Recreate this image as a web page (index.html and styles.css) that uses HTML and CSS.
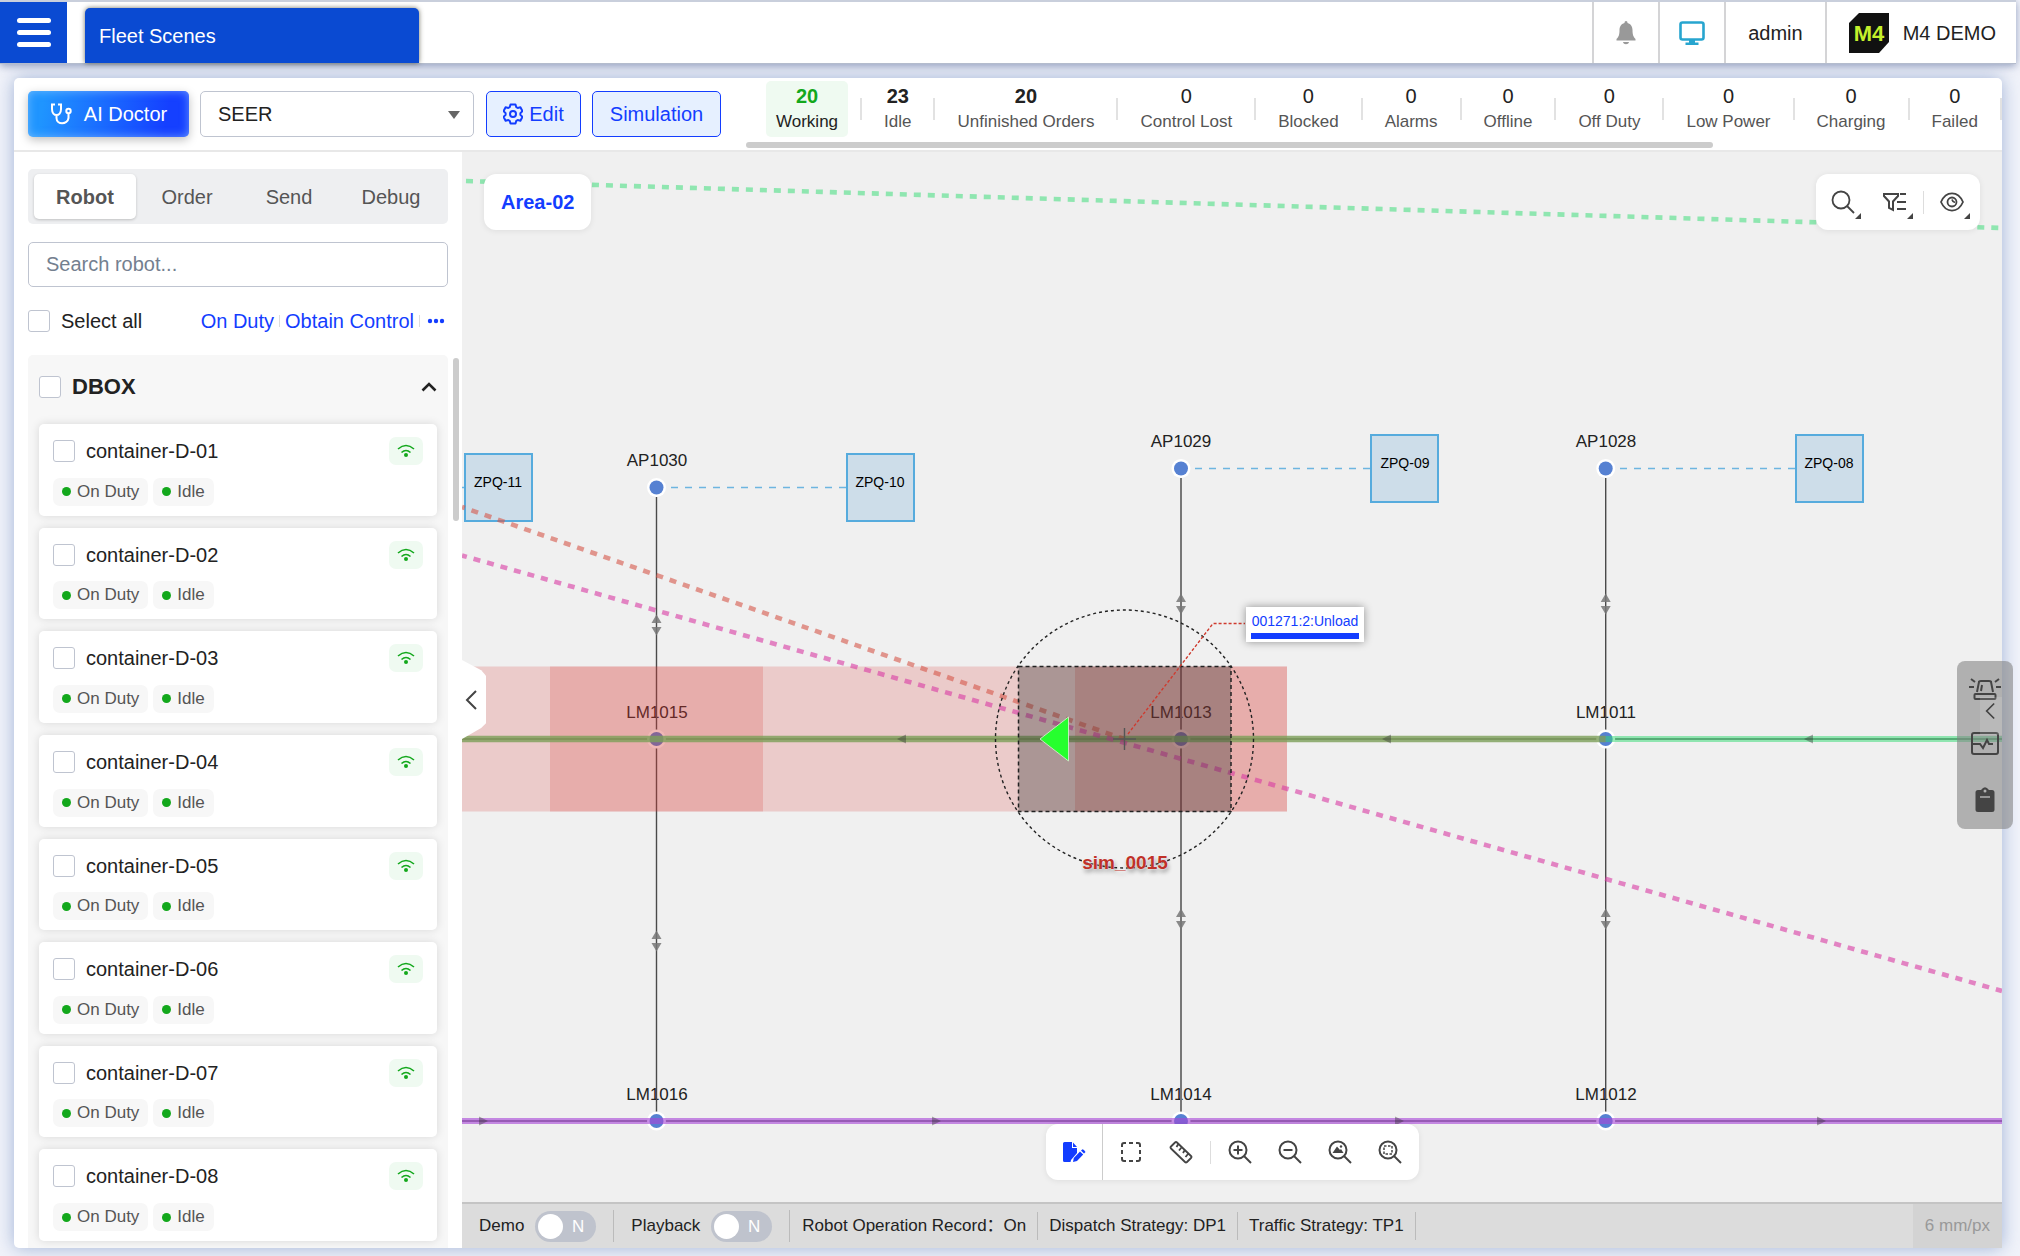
FILE: index.html
```html
<!DOCTYPE html>
<html lang="en">
<head>
<meta charset="utf-8">
<title>Fleet Scenes</title>
<link rel="stylesheet" href="styles.css">
</head>
<body>
<svg class="sprite" aria-hidden="true">
  <symbol id="wifi" viewBox="0 0 18 14"><path d="M1 5Q9-2 17 5M4.500 8.500Q9 4.500 13.500 8.500" fill="none" stroke="currentColor" stroke-width="1.600"/><circle cx="9" cy="11" r="2" fill="currentColor"/></symbol>
  <symbol id="back" viewBox="0 0 12 20"><path d="M11 1 2 10l9 9" fill="none" stroke="currentColor" stroke-width="2"/></symbol>
  <symbol id="lens" viewBox="0 0 24 24"><circle cx="10" cy="10" r="8.500" fill="none" stroke="currentColor" stroke-width="2"/><path d="m16 16 7 7" stroke="currentColor" stroke-width="2"/></symbol>
</svg>

<header class="topbar">
  <button class="menu" aria-label="Menu"><span></span><span></span><span></span></button>
  <a class="tab" href="#">Fleet Scenes</a>
  <div class="account">
    <button class="cell icon" aria-label="Notifications"><svg width="20" height="24" viewBox="0 0 20 24"><path d="M10 0c1 0 1.500.8 1.500 2C15 3 16.500 6 16.500 9c0 5 1 7 3 9v1.500H.5V18c2-2 3-4 3-9 0-3 1.500-6 5-7C8.500.8 9 0 10 0zM7 21h6c-.5 3-5.500 3-6 0z" fill="#999"/></svg></button>
    <button class="cell icon" aria-label="Screen"><svg width="26" height="24" viewBox="0 0 26 24"><rect x="1.500" y="1.500" width="23" height="17" rx="2" fill="none" stroke="#27a5cf" stroke-width="2.600"/><path d="M10 19h6v2.500h3.500V24h-13v-2.500H10z" fill="#27a5cf"/></svg></button>
    <button class="cell">admin</button>
    <a class="cell brand" href="#"><svg width="40" height="40" viewBox="0 0 40 40"><path d="M10 0h30v29L30 40H0V10z" fill="#111"/><text class="mark" x="20" y="28" text-anchor="middle">M4</text></svg>M4 DEMO</a>
  </div>
</header>

<main class="card">
  <div class="toolbar">
    <button class="btn doctor"><svg width="22" height="22" viewBox="0 0 22 22" fill="none" stroke="#fff" stroke-width="2"><path d="M5 1.500H2V6c0 8 9 8 9 0V1.500H8M6.500 12v3c0 7 11 7 12 0V10"/><circle cx="18.500" cy="8" r="2.200"/></svg>AI Doctor</button>
    <div class="scene"><select aria-label="Scene"><option>SEER</option></select></div>
    <button class="btn edit"><svg width="20" height="22" viewBox="0 0 20 22" fill="none" stroke="currentColor" stroke-width="2"><path d="M7.500 1.500h5l.8 2.700 1.400.8 2.700-.7 2 3.800-2 2v1.800l2 2-2 3.800-2.700-.7-1.400.8-.8 2.700h-5l-.8-2.700-1.400-.8-2.700.7-2-3.800 2-2v-1.800l-2-2 2-3.800 2.700.7 1.400-.8z" stroke-linejoin="round"/><circle cx="10" cy="11" r="3"/></svg>Edit</button>
    <button class="btn sim">Simulation</button>
    <div class="stats">
      <div class="row">
        <div class="stat on"><b>20</b><span>Working</span></div><i></i>
        <div class="stat"><b>23</b><span>Idle</span></div><i></i>
        <div class="stat"><b>20</b><span>Unfinished Orders</span></div><i></i>
        <div class="stat"><em>0</em><span>Control Lost</span></div><i></i>
        <div class="stat"><em>0</em><span>Blocked</span></div><i></i>
        <div class="stat"><em>0</em><span>Alarms</span></div><i></i>
        <div class="stat"><em>0</em><span>Offline</span></div><i></i>
        <div class="stat"><em>0</em><span>Off Duty</span></div><i></i>
        <div class="stat"><em>0</em><span>Low Power</span></div><i></i>
        <div class="stat"><em>0</em><span>Charging</span></div><i></i>
        <div class="stat"><em>0</em><span>Failed</span></div><i></i>
      </div>
      <div class="hbar"></div>
    </div>
  </div>

  <div class="body">
    <aside class="side">
      <nav class="tabs"><button class="active">Robot</button><button>Order</button><button>Send</button><button>Debug</button></nav>
      <input class="search" type="text" placeholder="Search robot..." aria-label="Search robot">
      <div class="bulk">
        <label><input type="checkbox">Select all</label>
        <span class="links"><a href="#">On Duty</a><i></i><a href="#">Obtain Control</a><i></i><button aria-label="More"><svg width="18" height="6" viewBox="0 0 18 6" fill="currentColor"><circle cx="3" cy="3" r="2.200"/><circle cx="9" cy="3" r="2.200"/><circle cx="15" cy="3" r="2.200"/></svg></button></span>
      </div>
      <div class="listwrap">
        <section class="group">
          <div class="ghead"><label><input type="checkbox">DBOX</label><button aria-label="Collapse group"><svg width="16" height="10" viewBox="0 0 16 10"><path d="m1.500 8.500 6.500-6.500 6.500 6.500" fill="none" stroke="#222" stroke-width="2.600"/></svg></button></div>
          <article class="robot"><div class="name"><label><input type="checkbox">container-D-01</label><span class="wifi"><svg width="18" height="14"><use href="#wifi"/></svg></span></div><div class="tags"><span>On Duty</span><span>Idle</span></div></article>
          <article class="robot"><div class="name"><label><input type="checkbox">container-D-02</label><span class="wifi"><svg width="18" height="14"><use href="#wifi"/></svg></span></div><div class="tags"><span>On Duty</span><span>Idle</span></div></article>
          <article class="robot"><div class="name"><label><input type="checkbox">container-D-03</label><span class="wifi"><svg width="18" height="14"><use href="#wifi"/></svg></span></div><div class="tags"><span>On Duty</span><span>Idle</span></div></article>
          <article class="robot"><div class="name"><label><input type="checkbox">container-D-04</label><span class="wifi"><svg width="18" height="14"><use href="#wifi"/></svg></span></div><div class="tags"><span>On Duty</span><span>Idle</span></div></article>
          <article class="robot"><div class="name"><label><input type="checkbox">container-D-05</label><span class="wifi"><svg width="18" height="14"><use href="#wifi"/></svg></span></div><div class="tags"><span>On Duty</span><span>Idle</span></div></article>
          <article class="robot"><div class="name"><label><input type="checkbox">container-D-06</label><span class="wifi"><svg width="18" height="14"><use href="#wifi"/></svg></span></div><div class="tags"><span>On Duty</span><span>Idle</span></div></article>
          <article class="robot"><div class="name"><label><input type="checkbox">container-D-07</label><span class="wifi"><svg width="18" height="14"><use href="#wifi"/></svg></span></div><div class="tags"><span>On Duty</span><span>Idle</span></div></article>
          <article class="robot"><div class="name"><label><input type="checkbox">container-D-08</label><span class="wifi"><svg width="18" height="14"><use href="#wifi"/></svg></span></div><div class="tags"><span>On Duty</span><span>Idle</span></div></article>
        </section>
        <div class="vbar"></div>
      </div>
    </aside>

    <section class="stage">
      <div class="map">
        <svg class="canvas" viewBox="462 152 1540 1050" preserveAspectRatio="xMidYMid slice" role="img" aria-label="Area map">
          <defs>
            <g id="node"><circle r="9.500" fill="#fff"/><circle r="7" fill="#5681d2"/></g>
            <path id="left" d="M-5 0 4-4.500v9z" fill="#333" opacity=".4"/>
            <path id="right" d="M5 0-4-4.500v9z" fill="#333" opacity=".4"/>
            <path id="both" d="M0-10.500 5-2h-10zM0 10.500 5 2h-10z" fill="#777" opacity=".85"/>
            <g id="bin"><rect x="1" y="1" width="67" height="67" fill="#cddde9" stroke="#56abdd" stroke-width="2"/></g>
          </defs>
          <!-- storage bins and their links -->
          <g stroke="#6db5e0" stroke-width="1.400" stroke-dasharray="7 7"><path d="M671 487.500h175M1195 468.500h175M1620 468.500h175M462 487.500h3"/></g>
          <use href="#bin" x="464" y="453"/><use href="#bin" x="846" y="453"/><use href="#bin" x="1370" y="434"/><use href="#bin" x="1795" y="434"/>
          <g class="bin-label"><text x="498" y="487">ZPQ-11</text><text x="880" y="487">ZPQ-10</text><text x="1405" y="468">ZPQ-09</text><text x="1829" y="468">ZPQ-08</text></g>
          <!-- lanes -->
          <g class="map-label"><text x="657" y="466">AP1030</text><text x="1181" y="447">AP1029</text><text x="1606" y="447">AP1028</text><text x="657" y="718">LM1015</text><text x="1181" y="718">LM1013</text><text x="1606" y="718">LM1011</text><text x="657" y="1100">LM1016</text><text x="1181" y="1100">LM1014</text><text x="1606" y="1100">LM1012</text></g>
          <path d="M656.500 497v624M1605.700 478v643" stroke="#4a4a4a" stroke-width="1.400"/>
          <path d="M1181 478v643" stroke="#777" stroke-width="2"/>
          <path d="M462 739h1540M462 1121h1540" stroke="#555" stroke-width="1.600"/>
          <use href="#node" x="656.500" y="487.500"/><use href="#node" x="1181" y="468.500"/><use href="#node" x="1605.700" y="468.500"/>
          <use href="#node" x="656.500" y="739"/><use href="#node" x="1181" y="739"/><use href="#node" x="1605.700" y="739"/>
          <use href="#node" x="656.500" y="1121"/><use href="#node" x="1181" y="1121"/><use href="#node" x="1605.700" y="1121"/>
          <use href="#both" x="656.500" y="625"/><use href="#both" x="1181" y="604"/><use href="#both" x="1605.700" y="604"/>
          <use href="#both" x="656.500" y="941"/><use href="#both" x="1181" y="919"/><use href="#both" x="1605.700" y="919"/>
          <!-- reserved space -->
          <path d="M462 666.500h825v145H462z" fill="#d73732" opacity=".2"/>
          <path d="M550 666.500h213v145H550zM1075 666.500h212v145h-212z" fill="#d73732" opacity=".2"/>
          <path d="M462 1121h1540" stroke="#a848d8" stroke-width="6" opacity=".62"/>
          <path d="M462 739h1143.700" stroke="#7da059" stroke-width="6.500" opacity=".8"/>
          <path d="M1605.700 739H2002" stroke="#31dc72" stroke-width="6" opacity=".5"/>
          <use href="#left" x="902" y="739"/><use href="#left" x="1387" y="739"/><use href="#left" x="1809" y="739"/>
          <use href="#right" x="483" y="1121"/><use href="#right" x="936" y="1121"/><use href="#right" x="1399" y="1121"/><use href="#right" x="1821" y="1121"/>
          <!-- planned routes -->
          <g fill="none" stroke-width="4.600" stroke-dasharray="7 7">
            <path d="M466 181 2002 228" stroke="#35dc75" opacity=".52"/>
            <path d="M462 507 1124 739" stroke="#d6564a" stroke-dashoffset="4" opacity=".6"/>
            <path d="M462 555.500 2002 991" stroke="#d93aa3" stroke-dashoffset="2" opacity=".6"/>
          </g>
          <!-- vehicle -->
          <path d="M1018.500 666.500h212.500v145h-212.500z" fill="#303030" opacity=".34"/>
          <path d="M1018.500 666.500h212.500v145h-212.500z" fill="none" stroke="#222" stroke-width="1.500" stroke-dasharray="4 3"/>
          <circle cx="1124.500" cy="739" r="129" fill="none" stroke="#222" stroke-width="1.400" stroke-dasharray="3 3"/>
          <path d="M1113 739h23M1124.500 728v22" stroke="#555" stroke-width="1.400"/>
          <path d="M1040 739 1068.500 717v44z" fill="#26ff2e" stroke="#c8e8c0" stroke-width="1"/>
          <path d="m1128 734 85-110.500h32" fill="none" stroke="#cf3a2e" stroke-width="1.400" stroke-dasharray="3 2"/>
          <text class="vehicle" x="1125" y="869">sim_0015</text>
          <g class="callout"><rect class="plate" x="1246" y="607" width="118" height="35"/><text x="1305" y="626">001271:2:Unload</text><rect x="1251" y="633" width="108" height="6" fill="#133dff"/></g>
        </svg>

        <div class="area">Area-02</div>
        <div class="tools">
          <button class="drop" aria-label="Search map"><svg width="24" height="24" viewBox="0 0 24 24" fill="none" stroke="currentColor" stroke-width="1.800"><circle cx="10" cy="10" r="8.500"/><path d="m16 16 7 7"/></svg></button>
          <button class="drop" aria-label="Filter"><svg width="24" height="20" viewBox="0 0 24 20" fill="none" stroke="currentColor" stroke-width="2"><path d="M1 2h14v2L10 9.500V18l-4-2V9.500L1 4zM17 2h6M14 10h9M14 17h9"/></svg></button>
          <i></i>
          <button class="drop" aria-label="Visibility"><svg width="24" height="20" viewBox="0 0 24 20" fill="none" stroke="currentColor" stroke-width="1.800"><path d="M1 10C6-1.500 18-1.500 23 10 18 21.500 6 21.500 1 10z"/><circle cx="12" cy="10" r="4.500"/><path d="M12 7.500q1 3 3 2.500"/></svg></button>
        </div>
        <button class="handle" aria-label="Collapse sidebar"><svg width="12" height="20"><use href="#back"/></svg></button>
        <div class="dock">
          <button aria-label="Alarms"><svg width="32" height="24" viewBox="0 0 32 24" fill="none" stroke="currentColor" stroke-width="2"><path d="M8 15 10 5q0-1 2-1h8q2 0 2 1l2 10M13 8l-1 6M0 10h5M27 10h5M2 2l4 3M30 2l-4 3"/><rect x="5.500" y="17" width="21" height="5" rx="1"/></svg></button>
          <button aria-label="Monitor"><svg width="28" height="24" viewBox="0 0 28 24" fill="none" stroke="currentColor" stroke-width="2"><rect x="1" y="1" width="26" height="21" rx="2"/><path d="M2 12h7l3 4 4-8 2 4h4"/></svg></button>
          <button aria-label="Tasks"><svg width="20" height="26" viewBox="0 0 20 26"><path d="M3 3h3q4-5.500 8 0h3q2.500 0 2.500 2.500v17Q19.500 25 17 25H3Q.5 25 .5 22.500v-17Q.5 3 3 3z" fill="currentColor"/><circle cx="10" cy="4" r="1.500" fill="#b0b0b0"/><path d="M5 10h10" stroke="#b0b0b0" stroke-width="1.500"/></svg></button>
          <span class="peek"><svg width="10" height="18" viewBox="0 0 12 20"><use href="#back"/></svg></span>
        </div>
        <div class="palette">
          <button class="main" aria-label="Edit scene"><svg width="24" height="22" viewBox="0 0 24 22" fill="currentColor"><path d="M2.500 1H10v6h5v5l-6 7-.5 2H2.500Q1 21 1 19.500v-17Q1 1 2.500 1zM11 1.500 15 6h-4z"/><path d="m11 21 .8-4 6.200-6.500 3.200 3L15 20zM19 9.500l1.500-1.200q1.500.2 3 2.700L22 12.500z"/></svg></button>
          <button aria-label="Select area"><svg width="22" height="22" viewBox="0 0 22 22"><path d="M2 6V4q0-2 2-2h2M9 2h4M16 2h2q2 0 2 2v2M20 9v4M20 16v2q0 2-2 2h-2M13 20H9M6 20H4q-2 0-2-2v-2M2 13V9" fill="none" stroke="currentColor" stroke-width="2"/></svg></button>
          <button aria-label="Measure"><svg width="24" height="24" viewBox="0 0 24 24" fill="none" stroke="currentColor" stroke-width="1.800"><path d="M2 6.500 6 2.500q1-1 2 0L22 16q1 1 0 2l-4 4q-1 1-2 0L2 8.500q-1-1 0-2zM9 4.500 7.500 7M12.500 7.500 10 10.500M15.500 10.500 14 13M19 14l-2.500 3"/></svg></button>
          <i></i>
          <button aria-label="Zoom in"><svg width="24" height="24" viewBox="0 0 24 24"><use href="#lens"/><path d="M5.500 10h9M10 5.500v9" stroke="currentColor" stroke-width="2"/></svg></button>
          <button aria-label="Zoom out"><svg width="24" height="24" viewBox="0 0 24 24"><use href="#lens"/><path d="M5.500 10h9" stroke="currentColor" stroke-width="2"/></svg></button>
          <button aria-label="Fit map"><svg width="24" height="24" viewBox="0 0 24 24"><use href="#lens"/><path d="m4.500 13 4.500-6.500 3 3.500 1-1 2.500 4z" fill="currentColor"/><circle cx="13" cy="6.500" r="1.200" fill="currentColor"/></svg></button>
          <button aria-label="Fit selection"><svg width="24" height="24" viewBox="0 0 24 24"><use href="#lens"/><rect x="6" y="6" width="8" height="8" fill="none" stroke="currentColor" stroke-width="1.500" stroke-dasharray="2.500 1.500"/></svg></button>
        </div>
      </div>
      <footer class="status">
        <label>Demo<span class="switch"><input type="checkbox" role="switch"><b>N</b></span></label><i class="tall"></i>
        <label>Playback<span class="switch"><input type="checkbox" role="switch"><b>N</b></span></label><i class="tall near"></i>
        <span>Robot Operation Record：On</span><i></i>
        <span>Dispatch Strategy: DP1</span><i></i>
        <span>Traffic Strategy: TP1</span><i></i>
        <span class="scale">6 mm/px</span>
      </footer>
    </section>
  </div>
</main>
</body>
</html>
```
FILE: styles.css
```css
* { box-sizing: border-box; }
html, body { height: 100%; }
body {
  margin: 0;
  display: flex;
  flex-direction: column;
  background: #f1f3fa;
  color: #222;
  font: 20px/24px "Liberation Sans", "Noto Sans CJK SC", sans-serif;
  overflow: hidden;
}
button { font: inherit; color: inherit; background: none; border: 0; padding: 0; cursor: pointer; }
a { color: inherit; text-decoration: none; }
svg { display: block; flex: none; }
.sprite { position: absolute; width: 0; height: 0; }

input[type="checkbox"] {
  appearance: none;
  width: 22px;
  height: 22px;
  margin: 0;
  border: 1px solid #bfc4d0;
  border-radius: 3px;
  background: #fff;
  flex: none;
}

/* top bar */
.topbar {
  display: flex;
  height: 64px;
  flex: none;
  margin-right: 4px;
  border-top: 2px solid #c9cfdc;
  border-bottom: 1px solid #b4bccd;
  background: #fff;
  box-shadow: 0 2px 8px rgba(70, 90, 140, .55);
  position: relative;
}
.menu {
  width: 67px;
  background: #0a4ad2;
  display: flex;
  flex-direction: column;
  align-items: center;
  justify-content: center;
  gap: 7px;
}
.menu span { width: 34px; height: 5px; border-radius: 3px; background: #fff; }
.tab {
  width: 334px;
  margin: 6px 0 0 18px;
  padding: 16px 14px;
  border-radius: 5px 5px 0 0;
  background: #0a4ad2;
  color: #fff;
  box-shadow: 0 0 5px rgba(60, 60, 40, .7);
}
.account { margin-left: auto; display: flex; }
.cell {
  display: flex;
  align-items: center;
  border-left: 2px solid #d4d4d6;
  padding: 0 22px;
}
.cell.icon { width: 66px; padding: 0; justify-content: center; }
.brand { gap: 14px; padding: 0 20px 0 22px; }
.mark { font-size: 22px; font-weight: bold; fill: #c5f02c; }

/* main card */
.card {
  flex: 1;
  min-height: 0;
  margin: 14px 18px 8px 14px;
  display: flex;
  flex-direction: column;
  background: #fff;
  border-radius: 5px;
  box-shadow: 0 0 18px rgba(80, 115, 180, .5);
}
.toolbar {
  flex: none;
  height: 74px;
  display: flex;
  padding-left: 14px;
  border-bottom: 2px solid #e8e8e8;
}
.btn {
  height: 46px;
  margin-top: 13px;
  border-radius: 5px;
  display: flex;
  align-items: center;
  justify-content: center;
}
.doctor {
  width: 161px;
  gap: 12px;
  color: #fff;
  background: linear-gradient(100deg, #1f95ff 10%, #1540ff 85%);
  box-shadow: 0 3px 10px rgba(0, 0, 0, .25), inset 0 0 10px rgba(160, 210, 255, .6);
}
.scene { position: relative; margin: 13px 12px 0 11px; height: 46px; }
.scene select {
  appearance: none;
  width: 274px;
  height: 46px;
  padding: 0 17px;
  border: 1px solid #bfc4d0;
  border-radius: 5px;
  background: #fff;
  font: inherit;
  color: inherit;
}
.scene::after {
  content: "";
  position: absolute;
  right: 14px;
  top: 20px;
  border: 6px solid transparent;
  border-top: 8px solid #666;
  border-bottom: 0;
}
.edit, .sim { border: 1px solid #133dff; background: #e6f0ff; color: #133dff; }
.edit { width: 95px; gap: 6px; margin-right: 11px; }
.sim { width: 129px; }

.stats { flex: 1; min-width: 0; margin-left: 25px; overflow: hidden; }
.row { display: flex; align-items: center; gap: 12px; padding: 3px 0 0 20px; }
.stat {
  flex: none;
  height: 56px;
  padding: 4px 10px;
  border-radius: 5px;
  display: flex;
  flex-direction: column;
  align-items: center;
  font-size: 17px;
}
.stat b, .stat em { font-size: 20px; font-style: normal; line-height: 22px; }
.stat span { color: #555; line-height: 30px; }
.stat.on { background: #effaf1; }
.stat.on b { color: #13a81c; }
.stat.on span { color: #222; }
.row i { flex: none; width: 2px; height: 22px; background: #e2e2e2; }
.hbar { width: 77%; height: 6px; margin-top: 5px; border-radius: 3px; background: #ccc; }

.body { flex: 1; min-height: 0; display: flex; }

/* sidebar */
.side {
  width: 448px;
  flex: none;
  padding: 17px 3px 0 14px;
  display: flex;
  flex-direction: column;
}
.tabs, .search, .bulk { margin-right: 11px; }
.tabs {
  display: grid;
  grid-template-columns: repeat(4, 1fr);
  padding: 5px 6px;
  border-radius: 5px;
  background: #eeeff1;
  color: #555;
}
.tabs button { height: 45px; border-radius: 5px; }
.tabs .active { background: #fff; font-weight: bold; box-shadow: 0 1px 3px rgba(0, 0, 0, .2); }
.search {
  height: 45px;
  margin-top: 18px;
  padding: 0 17px;
  border: 1px solid #bfc4d0;
  border-radius: 5px;
  font: inherit;
}
.search::placeholder { color: #74808f; opacity: 1; }
.bulk { display: flex; justify-content: space-between; align-items: center; margin-top: 22px; }
.bulk label, .ghead label, .name label { display: flex; align-items: center; gap: 11px; }
.links { display: flex; align-items: center; gap: 5px; color: #133dff; margin-right: 3px; }
.links i { width: 1px; height: 12px; background: #ddd; }
.links button { margin-left: 2px; }
.listwrap { flex: 1; min-height: 0; margin-top: 22px; display: flex; gap: 5px; }
.group {
  flex: 1;
  display: flex;
  flex-direction: column;
  gap: 12px;
  padding: 0 11px 7px;
  border-radius: 5px 5px 0 0;
  background: #f7f7f7;
}
.ghead { display: flex; align-items: center; justify-content: space-between; height: 57px; padding-top: 6px; font-size: 22px; font-weight: bold; }
.robot {
  flex: 1;
  min-height: 0;
  display: flex;
  flex-direction: column;
  justify-content: space-between;
  padding: 13px 14px 10px;
  border-radius: 5px;
  background: #fff;
  box-shadow: 0 0 10px rgba(0, 0, 0, .13);
}
.name { display: flex; justify-content: space-between; align-items: center; }
.wifi { display: grid; place-items: center; width: 34px; height: 28px; border-radius: 7px; background: #effaf1; color: #13a81c; }
.tags { display: flex; gap: 5px; font-size: 17px; color: #555; }
.tags span { display: flex; align-items: center; gap: 6px; height: 28px; padding: 0 9px; border-radius: 7px; background: #f7f7f7; }
.tags span::before { content: ""; width: 9px; height: 9px; border-radius: 50%; background: #13a81c; }
.vbar { width: 6px; height: 163px; margin-top: 3px; border-radius: 3px; background: #ccc; }

/* map */
.stage { flex: 1; min-width: 0; display: flex; flex-direction: column; }
.map { flex: 1; min-height: 0; position: relative; background: #f0f0f0; color: #444; }
.canvas { position: absolute; width: 100%; height: 100%; }
.canvas text { text-anchor: middle; }
.bin-label { font-size: 14px; fill: #000; }
.map-label { font-size: 17px; fill: #222; }
.vehicle { font-size: 19px; font-weight: bold; fill: #c03128; text-shadow: 0 0 2px #fff, 1px 3px 4px rgba(0, 0, 0, .4); }
.callout text { font-size: 14px; fill: #133dff; }
.plate { fill: #fff; filter: drop-shadow(0 0 4px rgba(0, 0, 0, .4)); }

.area, .tools, .palette {
  position: absolute;
  background: #fff;
  border-radius: 12px;
  height: 56px;
  display: flex;
  align-items: center;
  box-shadow: 0 1px 6px rgba(0, 0, 0, .08);
}
.area { left: 22px; top: 22px; padding: 0 17px; color: #133dff; font-weight: bold; }
.tools { right: 22px; top: 22px; padding: 0 2px 0 1px; }
.tools i, .palette i { width: 1px; height: 23px; background: #ddd; }
.tools button { position: relative; width: 52px; height: 40px; display: grid; place-items: center; }
.tools i { margin: 0 2px; }
.drop::after {
  content: "";
  position: absolute;
  right: 8px;
  bottom: 3px;
  border: 3px solid;
  border-color: transparent #444 #444 transparent;
}
.palette { left: 584px; bottom: 22px; padding-right: 4px; }
.palette button { width: 50px; height: 56px; display: grid; place-items: center; }
.palette .main { width: 57px; margin-right: 3px; border-right: 1px solid #ccc; color: #133dff; }
.palette i { margin: 0 4px; }

.handle {
  position: absolute;
  left: 0;
  top: 508px;
  width: 24px;
  height: 79px;
  background: #fff;
  color: #444;
  clip-path: polygon(0 0, 80% 13%, 100% 20%, 100% 80%, 80% 86%, 0 100%);
  padding: 0 0 0 3px;
}
.dock {
  position: absolute;
  right: -11px;
  top: 509px;
  width: 56px;
  height: 168px;
  border-radius: 8px;
  background: rgba(130, 130, 130, .58);
  display: grid;
}
.dock button { display: grid; place-items: center; }
.peek { position: absolute; right: 11px; top: 36px; width: 22px; height: 38px; padding: 5px 0 0 5px; background: rgba(255, 255, 255, .12); }

/* status bar */
.status {
  flex: none;
  height: 46px;
  display: flex;
  align-items: center;
  padding-left: 17px;
  background: #dcdcdc;
  border-top: 2px solid #c4c4c4;
  border-radius: 0 0 5px 0;
  font-size: 17px;
}
.status label { display: flex; align-items: center; gap: 11px; }
.status i { width: 1px; height: 28px; margin: 0 11px; background: #bbb; }
.status .tall { height: 32px; margin: 0 17px; }
.status .near { margin-right: 12px; }
.switch { position: relative; }
.switch input[type="checkbox"] { display: block; width: 61px; height: 31px; border: 0; border-radius: 16px; background: #bfc3cd; }
.switch::after { content: ""; position: absolute; left: 3px; top: 3px; width: 25px; height: 25px; border-radius: 50%; background: #fff; }
.switch b { position: absolute; right: 12px; top: 4px; font-weight: normal; color: #fff; }
.scale { margin-left: auto; height: 100%; padding: 10px 12px; background: #d3d3d3; color: #999; }
```
